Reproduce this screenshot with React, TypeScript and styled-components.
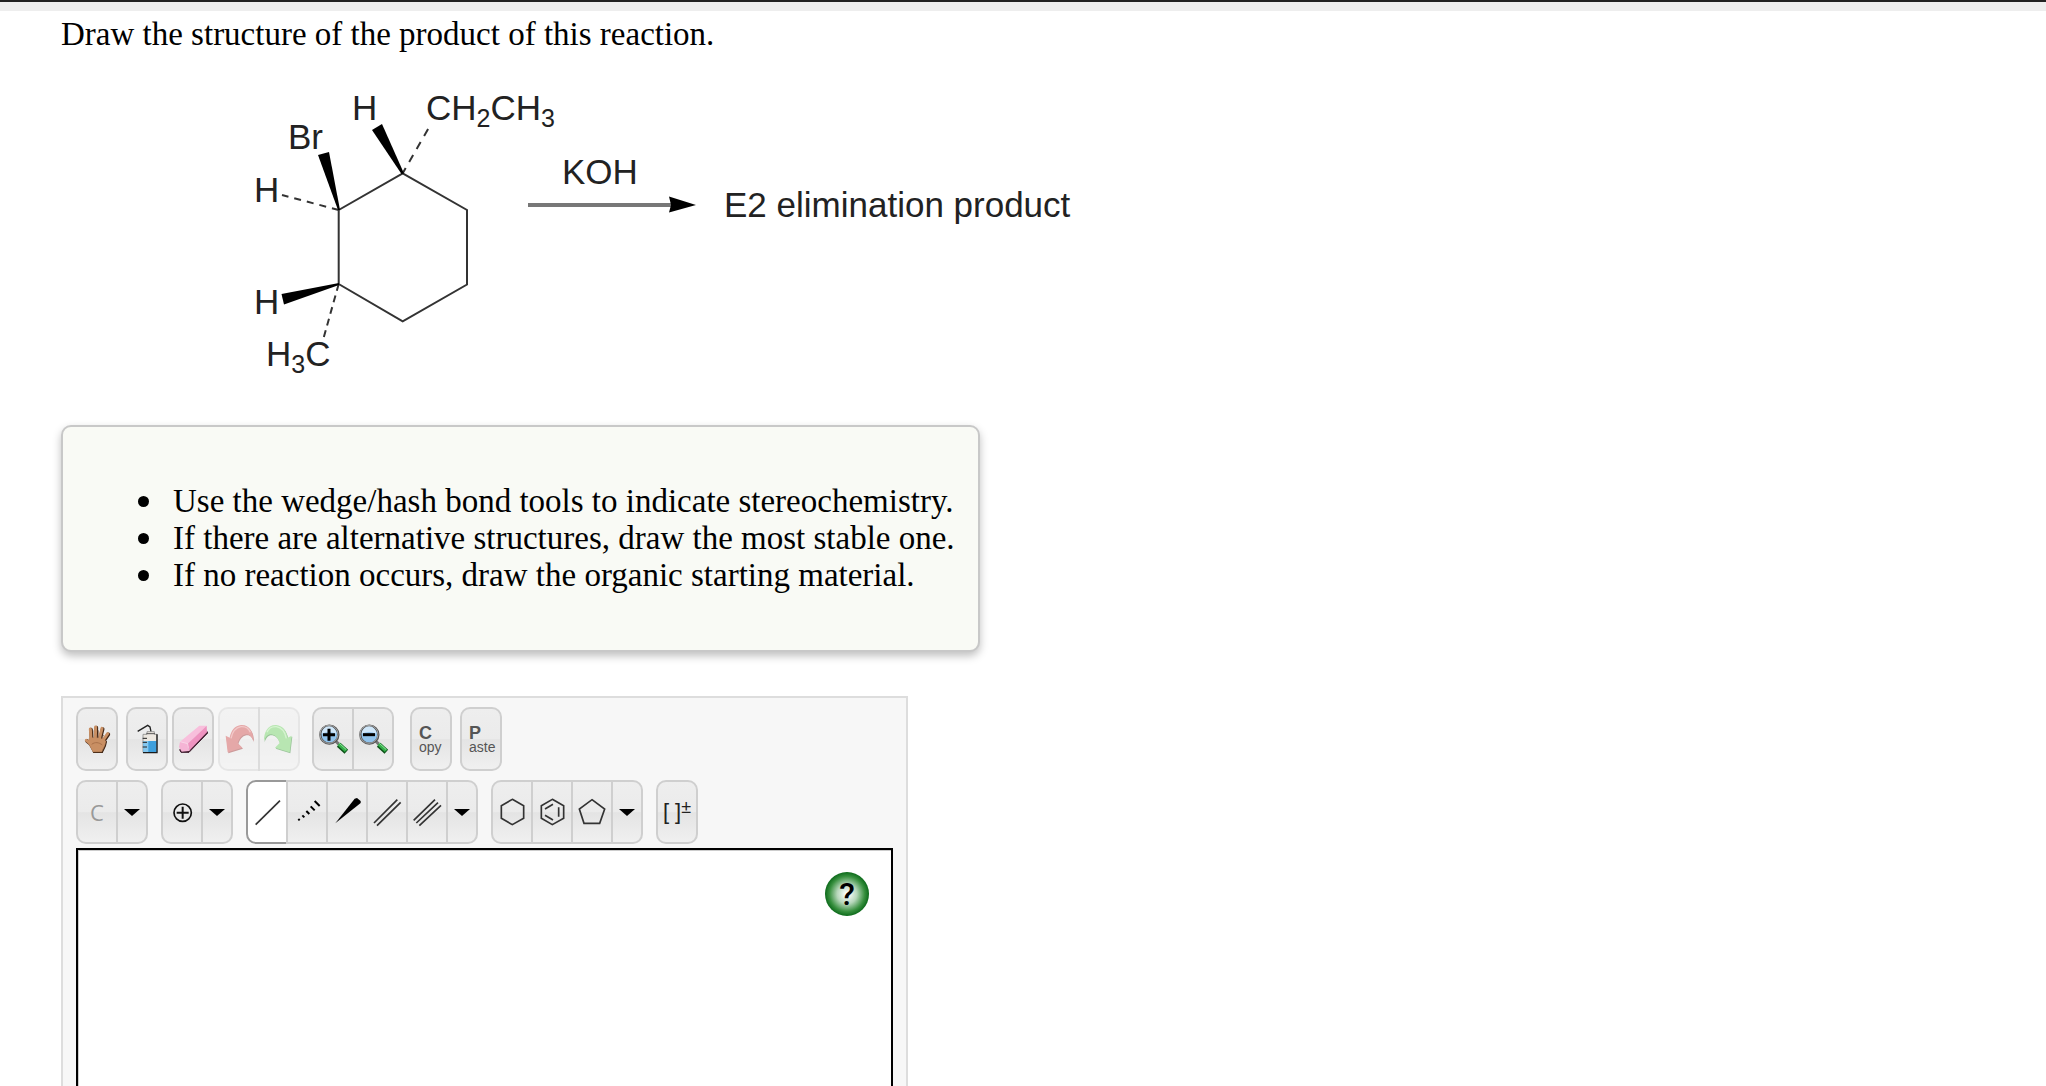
import React from "react";
import styled, { createGlobalStyle, css } from "styled-components";

const GlobalStyle = createGlobalStyle`
  *, *::before, *::after { box-sizing: border-box; }
  body {
    margin: 0;
    background: #fff;
    color: #000;
    font-family: "Liberation Serif", "Times New Roman", serif;
  }
`;

const Page = styled.div`
  display: flex;
  flex-direction: column;
  height: 100vh;
  overflow: hidden;
`;

const TopBar = styled.div`
  flex: none;
  height: 11px;
  background: #eee;
  border-top: 2px solid #222;
`;

const Main = styled.main`
  flex: 1;
  min-height: 0;
  display: flex;
  flex-direction: column;
  align-items: flex-start;
  padding: 5px 61px 0;
`;

const Question = styled.h1`
  margin: 0;
  font-size: 33px;
  line-height: 37px;
  font-weight: 400;
`;

const Scheme = styled.svg`
  flex: none;
  display: block;
  width: 1030px;
  max-width: 100%;
  margin-top: 27px;
  font-family: "Liberation Sans", Arial, sans-serif;
  font-size: 35px;
  fill: #222;
`;

const Hints = styled.section`
  flex: none;
  margin-top: 35px;
  padding: 56px 23px 56px 75px;
  border: 2px solid #c8c8c8;
  border-radius: 10px;
  background: #f9faf5;
  box-shadow: 0 4px 8px rgba(0, 0, 0, 0.25);
`;

const HintList = styled.ul`
  margin: 0;
  padding: 0;
  list-style: none;
  font-size: 33px;
  line-height: 37px;
`;

const Hint = styled.li`
  display: flex;
  align-items: center;
  gap: 24px;
  &::before {
    content: "";
    flex: none;
    width: 11px;
    height: 11px;
    border-radius: 50%;
    background: #000;
  }
`;

const Editor = styled.section`
  flex: 1;
  display: flex;
  flex-direction: column;
  width: 100%;
  max-width: 847px;
  margin-top: 44px;
  padding: 9px 13px 0;
  border: 2px solid #ddd;
  border-bottom: 0;
  background: #f7f7f7;
`;

const Toolbar = styled.div<{ $gap: number }>`
  flex: none;
  display: flex;
  gap: ${(p) => p.$gap}px;
  margin-bottom: ${(p) => (p.$gap > 8 ? 4 : 9)}px;
`;

const Cluster = styled.div<{ $gap?: number; $lead?: number }>`
  display: flex;
  gap: ${(p) => p.$gap ?? 0}px;
  margin-left: ${(p) => p.$lead ?? 0}px;
`;

const ToolButton = styled.button<{ $selected?: boolean; $menu?: boolean }>`
  display: flex;
  flex-direction: column;
  align-items: center;
  justify-content: center;
  width: ${(p) => (p.$menu ? 32 : 42)}px;
  height: 64px;
  padding: 0;
  border: 2px solid #cfcfcf;
  border-radius: 10px;
  background: linear-gradient(#eee, #ebebeb 50%, #e4e4e4 51%, #f0f0f0);
  color: #555;
  font-family: "Liberation Sans", Arial, sans-serif;
  ${(p) =>
    p.$selected &&
    css`
      background: #fff;
      border-color: #999;
    `}
  &:disabled {
    opacity: 0.4;
  }
`;

const Group = styled.div`
  display: flex;
  & > button + button {
    margin-left: -2px;
    border-top-left-radius: 0;
    border-bottom-left-radius: 0;
  }
  & > button:not(:last-child) {
    border-top-right-radius: 0;
    border-bottom-right-radius: 0;
  }
`;

const Icon = styled.svg`
  flex: none;
  width: 36px;
  height: 36px;
  fill: none;
  stroke: #333;
  stroke-width: 5;
`;

const Caret = styled.span`
  border: 8px solid transparent;
  border-top: 7px solid #000;
  border-bottom: 0;
`;

const WordLabel = styled.span`
  display: flex;
  flex-direction: column;
  width: 24px;
  font-size: 14px;
  line-height: 12px;
  text-align: left;
`;

const Initial = styled.span`
  font-size: 18px;
  line-height: 16px;
  font-weight: 700;
`;

const Element = styled.span`
  font-family: "Open Sans", sans-serif;
  font-size: 22px;
  line-height: 26px;
  color: #999;
`;

const Brackets = styled.span`
  display: flex;
  align-items: flex-start;
  font-size: 22px;
  line-height: 26px;
  color: #222;
`;

const Charge = styled.span`
  font-size: 18px;
  line-height: 16px;
`;

const Canvas = styled.div`
  flex: 1;
  display: flex;
  justify-content: flex-end;
  align-items: flex-start;
  padding: 22px;
  border: 2px solid #000;
  border-bottom: 0;
  background: #fff;
  box-shadow: inset 1px 1px 0 #ccc;
`;

const Help = styled.button`
  width: 44px;
  height: 44px;
  padding: 0;
  border: 0;
  border-radius: 50%;
  background: radial-gradient(circle closest-side, #fff 5%, #b5d6b9 45%, #38903f 80%, #0c6a1a);
  color: #000;
  font-family: "Roboto", "Liberation Sans", sans-serif;
  font-size: 32px;
  font-weight: 500;
  line-height: 44px;
`;

const Tool = ({
  label,
  children,
  selected,
  disabled,
}: {
  label: string;
  children: React.ReactNode;
  selected?: boolean;
  disabled?: boolean;
}) => (
  <ToolButton type="button" aria-label={label} $selected={selected} disabled={disabled}>
    {children}
  </ToolButton>
);

const Menu = ({ label }: { label: string }) => (
  <ToolButton type="button" aria-label={label} aria-haspopup="menu" $menu>
    <Caret />
  </ToolButton>
);

const Glyph = ({ children }: { children: React.ReactNode }) => (
  <Icon viewBox="0 0 108 108" aria-hidden="true">
    {children}
  </Icon>
);

const HAND = "M36 58 L34 24 M49 54 L50 18 M61 54 L69 22 M68 64 L86 38 M42 74 L22 58";
const PALM = "M33 50 L70 52 L80 60 C78 76 72 82 68 92 L42 92 C38 82 32 76 28 62 Z";

const HandIcon = () => (
  <Glyph>
    <g stroke="#3f2413" strokeWidth="11" strokeLinecap="round" transform="translate(2 2)">
      <path d={HAND} />
      <path d={PALM} fill="#3f2413" strokeWidth="4" />
    </g>
    <g stroke="#c98f63" strokeWidth="9" strokeLinecap="round">
      <path d={HAND} />
      <path d={PALM} fill="#c98f63" strokeWidth="2" />
    </g>
    <path d="M42 28 V50 M58 28 V50 M74 42 L67 54" stroke="#6e4225" strokeWidth="2" />
    <path d="M38 70 C48 62 60 64 70 72" stroke="#a9714a" strokeWidth="3" />
  </Glyph>
);

const BottleIcon = () => (
  <Glyph>
    <path d="M26 31 L56 13 L63 18 L66 32" strokeWidth="4" stroke="#222" />
    <path d="M54 32 H76 V40 H84 V94 H42 V40 H54 Z" fill="#ece7e0" stroke="#777" strokeWidth="2" />
    <path d="M43 60 H83 V93 H43 Z" fill="#3e9fdc" stroke="none" />
    <path d="M43 60 H58 V93 H43 Z" fill="#86c8ef" stroke="none" />
    <path d="M84 40 V95 H42" stroke="#1b1b1b" strokeWidth="4" />
    <path d="M41 52 H54 M41 64 H54 M41 78 H54" stroke="#222" strokeWidth="3" />
    <path d="M52 38 H78" stroke="#555" strokeWidth="3" />
  </Glyph>
);

const EraserIcon = () => (
  <Glyph>
    <path d="M42 94 L18 94 L14 86 L40 82 L95 30 L98 36 Z" fill="#3d1a2c" stroke="#3d1a2c" strokeWidth="3" />
    <path d="M15 62 L73 14 L95 14 L38 68 Z" fill="#f8bfdc" stroke="none" />
    <path d="M38 68 L95 14 L96 34 L42 90 Z" fill="#ee93c0" stroke="none" />
    <path d="M15 62 L38 68 L42 90 L20 92 L12 78 Z" fill="#f5b4d5" stroke="none" />
    <path d="M15 62 L38 68 L42 90" stroke="#fbdcec" strokeWidth="2" />
  </Glyph>
);

const ARROW =
  "M14 44 L26 50 C30 28 42 14 60 12 C84 10 98 32 97 60 C92 46 84 38 74 40 C62 42 54 54 50 66 L64 80 L20 94 Z";

const UndoIcon = () => (
  <Glyph>
    <path d={ARROW} fill="#8f1414" stroke="none" transform="translate(2 3)" />
    <path d={ARROW} fill="#cc3535" stroke="none" />
    <path d="M30 52 C34 32 44 20 60 17 C74 16 84 24 88 34" stroke="#ec8585" strokeWidth="4" />
  </Glyph>
);

const RedoIcon = () => (
  <Glyph>
    <g transform="translate(106 0) scale(-1 1)">
      <path d={ARROW} fill="#157a15" stroke="none" transform="translate(-2 3)" />
      <path d={ARROW} fill="#5ccf4c" stroke="none" />
      <path d="M30 52 C34 32 44 20 60 17 C74 16 84 24 88 34" stroke="#a5f098" strokeWidth="4" />
    </g>
  </Glyph>
);

const ZoomIcon = ({ plus }: { plus?: boolean }) => (
  <Glyph>
    <path d="M62 60 L72 70" stroke="#777" strokeWidth="9" />
    <path d="M71 71 L94 92" stroke="#0c5218" strokeWidth="16" />
    <path d="M71 69 L93 89" stroke="#34b04a" strokeWidth="10" />
    <path d="M73 67 L94 86" stroke="#90e49c" strokeWidth="3" />
    <circle cx="43" cy="41" r="27" fill="#90c3ec" stroke="#555" strokeWidth="7" />
    <circle cx="42" cy="40" r="27" stroke="#a5a5a5" strokeWidth="3" />
    <path d="M20 38 A22 22 0 0 1 64 38 Q42 28 20 38 Z" fill="#cfe6f8" stroke="none" />
    <path d={plus ? "M24 41 H60 M42 23 V59" : "M24 41 H60"} stroke="#000" strokeWidth="9" />
  </Glyph>
);

const HexagonPath = "M55 16 L89 35 V73 L55 92 L22 73 V35 Z";

const Reaction = () => (
  <Scheme viewBox="61 80 1030 310" role="img" aria-label="Reaction scheme">
    <g fill="none" stroke="#333" strokeWidth="2">
      <path d="M402.7 173.3 L467 210 V284.5 L402.7 321.3 L338.7 284 V210 Z" />
      <path d="M402.7 173.3 L431 124" strokeDasharray="8 7" strokeDashoffset="2" />
      <path d="M338.7 210 L282 195" strokeDasharray="7 6" />
      <path d="M338.7 284 L323 340" strokeDasharray="7 5" />
    </g>
    <path d="M528 205 H672" stroke="#777" strokeWidth="4" />
    <g fill="#000">
      <path d="M404 173.5 L401.5 174 L372 130 L382 124 Z" />
      <path d="M340 210 L338 210 L318 155 L329 152 Z" />
      <path d="M339 283 L339 285 L284 304.5 L281.5 294 Z" />
      <path d="M669 196.5 L696 205 L669 212.5 L671 205 Z" />
    </g>
    <text x="352" y="120">H</text>
    <text x="426" y="120">
      CH<tspan fontSize="25" dy="7">2</tspan>
      <tspan dy="-7">CH</tspan>
      <tspan fontSize="25" dy="7">3</tspan>
    </text>
    <text x="288" y="149">Br</text>
    <text x="254" y="202">H</text>
    <text x="254" y="314">H</text>
    <text x="266" y="366">
      H<tspan fontSize="25" dy="7">3</tspan>
      <tspan dy="-7">C</tspan>
    </text>
    <text x="562" y="184">KOH</text>
    <text x="724" y="217">E2 elimination product</text>
  </Scheme>
);

export default function App() {
  return (
    <Page>
      <GlobalStyle />
      <TopBar />
      <Main>
        <Question>Draw the structure of the product of this reaction.</Question>
        <Reaction />
        <Hints>
          <HintList>
            <Hint>Use the wedge/hash bond tools to indicate stereochemistry.</Hint>
            <Hint>If there are alternative structures, draw the most stable one.</Hint>
            <Hint>If no reaction occurs, draw the organic starting material.</Hint>
          </HintList>
        </Hints>
        <Editor aria-label="Structure editor">
          <Toolbar $gap={8}>
            <Tool label="Move"><HandIcon /></Tool>
            <Cluster $gap={4}>
              <Tool label="Clear"><BottleIcon /></Tool>
              <Tool label="Erase"><EraserIcon /></Tool>
              <Group>
                <Tool label="Undo" disabled><UndoIcon /></Tool>
                <Tool label="Redo" disabled><RedoIcon /></Tool>
              </Group>
            </Cluster>
            <Cluster $lead={4}>
              <Group>
                <Tool label="Zoom in"><ZoomIcon plus /></Tool>
                <Tool label="Zoom out"><ZoomIcon /></Tool>
              </Group>
            </Cluster>
            <Cluster $gap={8} $lead={8}>
              <Tool label="Copy">
                <WordLabel><Initial>C</Initial>opy</WordLabel>
              </Tool>
              <Tool label="Paste">
                <WordLabel><Initial>P</Initial>aste</WordLabel>
              </Tool>
            </Cluster>
          </Toolbar>
          <Toolbar $gap={13}>
            <Group>
              <Tool label="Carbon"><Element>C</Element></Tool>
              <Menu label="More elements" />
            </Group>
            <Group>
              <Tool label="Positive charge">
                <Glyph>
                  <circle cx="56" cy="56" r="26" stroke="#111" />
                  <path d="M38 56 H74 M56 38 V74" stroke="#111" strokeWidth="6" />
                </Glyph>
              </Tool>
              <Menu label="More charges" />
            </Group>
            <Group>
              <Tool label="Single bond" selected>
                <Glyph><path d="M20 92 L93 20" /></Glyph>
              </Tool>
              <Tool label="Hashed bond">
                <Glyph>
                  <path
                    d="M28 75 L32 79 M40 64 L46 70 M52 51 L61 60 M65 37 L77 49 M77 21 L92 36"
                    stroke="#000"
                    strokeWidth="6"
                  />
                </Glyph>
              </Tool>
              <Tool label="Wedge bond">
                <Glyph><path d="M19 88 L77 14 L84 12 L95 21 L95 27 Z" fill="#000" stroke="none" /></Glyph>
              </Tool>
              <Tool label="Double bond">
                <Glyph><path d="M15 87 L85 17 M24 95 L95 25" /></Glyph>
              </Tool>
              <Tool label="Triple bond">
                <Glyph><path d="M14 79 L78 17 M22 87 L87 26 M31 95 L96 34" /></Glyph>
              </Tool>
              <Menu label="More bonds" />
            </Group>
            <Group>
              <Tool label="Cyclohexane"><Glyph><path d={HexagonPath} /></Glyph></Tool>
              <Tool label="Benzene">
                <Glyph>
                  <path d={HexagonPath} />
                  <path d="M74 40 V68 M33 45 L57 31 M33 64 L57 78" />
                </Glyph>
              </Tool>
              <Tool label="Cyclopentane">
                <Glyph><path d="M54 17 L92 45 L77 88 H30 L16 45 Z" /></Glyph>
              </Tool>
              <Menu label="More rings" />
            </Group>
            <Tool label="Bracket">
              <Brackets>[&nbsp;]<Charge>±</Charge></Brackets>
            </Tool>
          </Toolbar>
          <Canvas>
            <Help type="button" aria-label="Help">?</Help>
          </Canvas>
        </Editor>
      </Main>
    </Page>
  );
}
